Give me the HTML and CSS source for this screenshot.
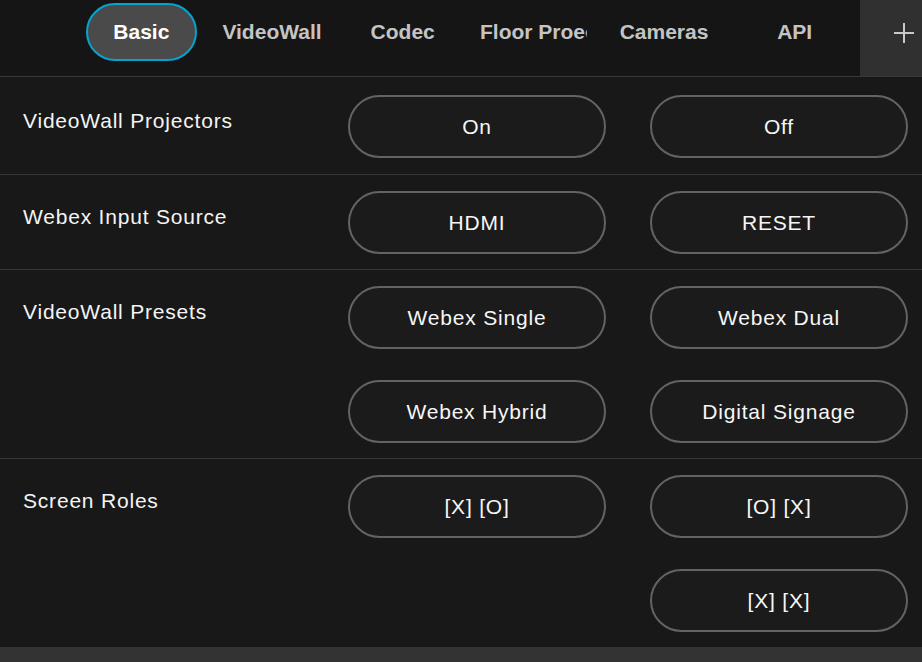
FILE: index.html
```html
<!DOCTYPE html>
<html lang="en">
<head>
<meta charset="utf-8">
<title>Room Controls</title>
<link rel="stylesheet" href="styles.css">
</head>
<body>
<div class="app">
  <header class="tabbar">
    <div class="tabbar-spacer"></div>
    <nav class="tabs">
      <div class="tab"><div class="pill pill-active">Basic</div></div>
      <div class="tab"><div class="pill">VideoWall</div></div>
      <div class="tab"><div class="pill">Codec</div></div>
      <div class="tab"><div class="pill">Floor Proectors</div></div>
      <div class="tab"><div class="pill">Cameras</div></div>
      <div class="tab"><div class="pill">API</div></div>
    </nav>
    <div class="add-box">
      <svg class="add-icon" width="20" height="20" viewBox="0 0 20 20" aria-hidden="true">
        <path d="M10 0V20M0 10H20" stroke="#c9c9c9" stroke-width="2" fill="none"/>
      </svg>
    </div>
  </header>

  <main class="panel">
    <section class="row row-first">
      <div class="label">VideoWall Projectors</div>
      <button class="btn">On</button>
      <button class="btn">Off</button>
    </section>
    <section class="row">
      <div class="label">Webex Input Source</div>
      <button class="btn">HDMI</button>
      <button class="btn">RESET</button>
    </section>
    <section class="row">
      <div class="label">VideoWall Presets</div>
      <button class="btn">Webex Single</button>
      <button class="btn">Webex Dual</button>
      <button class="btn btn-col2">Webex Hybrid</button>
      <button class="btn">Digital Signage</button>
    </section>
    <section class="row row-last">
      <div class="label">Screen Roles</div>
      <button class="btn">[X] [O]</button>
      <button class="btn">[O] [X]</button>
      <button class="btn btn-col3">[X] [X]</button>
    </section>
  </main>
  <div class="bottom-bar"></div>
</div>
</body>
</html>
```

FILE: styles.css
```css
* { box-sizing: border-box; }

html, body {
  margin: 0;
  padding: 0;
  background: #181818;
  overflow: hidden;
}

body {
  font-family: "Liberation Sans", Arial, sans-serif;
  color: #f2f2f2;
}

.app {
  width: 922px;
  height: 662px;
  display: flex;
  flex-direction: column;
}

/* ---------- Tab bar ---------- */
.tabbar {
  display: flex;
  height: 77px;
  background: #151515;
  border-bottom: 1px solid #393939;
}

.tabbar-spacer {
  width: 76px;
  flex: none;
}

.tabs {
  flex: 1;
  display: flex;
}

.tab {
  flex: 1 1 0;
  min-width: 0;
  padding: 3px 10px 0;
}

.pill {
  height: 58px;
  border: 2px solid transparent;
  border-radius: 29px;
  overflow: hidden;
  white-space: nowrap;
  text-align: center;
  font-weight: bold;
  font-size: 21px;
  line-height: 54px;
  color: #c4c4c4;
}

.pill-active {
  background: #4a4a4a;
  border-color: #07a3d0;
  color: #ffffff;
}

.add-box {
  width: 62px;
  flex: none;
  background: #303030;
  padding: 23px 0 0 34px;
}

.add-icon { display: block; }

/* ---------- Rows ---------- */
.panel {
  flex: 1;
  display: flex;
  flex-direction: column;
}

.row {
  display: grid;
  grid-template-columns: 1fr 258px 258px;
  column-gap: 44px;
  row-gap: 31px;
  padding: 16px 14px 15px 23px;
  border-bottom: 1px solid #363636;
}

.row-first { padding-top: 18px; padding-bottom: 16px; }
.row-last { border-bottom: none; }

.label {
  padding-top: 14px;
  font-size: 21px;
  letter-spacing: 0.8px;
  color: #f4f4f4;
  white-space: nowrap;
}

.btn {
  height: 63px;
  margin: 0;
  padding: 0;
  background: #1b1b1b;
  border: 2px solid #636363;
  border-radius: 32px;
  font-family: "Liberation Sans", Arial, sans-serif;
  font-size: 21px;
  letter-spacing: 0.8px;
  color: #f6f6f6;
  text-align: center;
}

.btn-col2 { grid-column: 2; }
.btn-col3 { grid-column: 3; }

.bottom-bar {
  height: 15px;
  flex: none;
  background: #333333;
}
```
